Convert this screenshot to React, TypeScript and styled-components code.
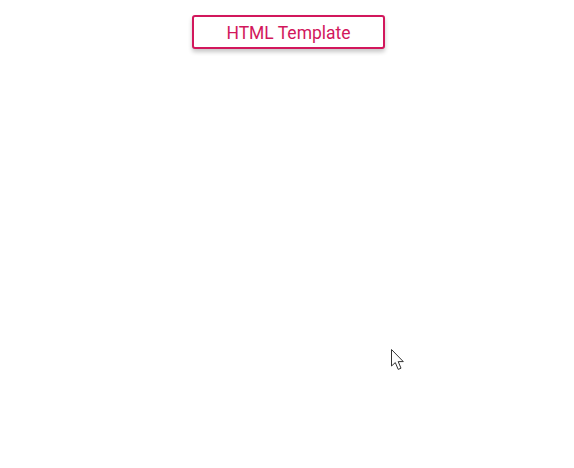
import React from "react"
import styled, { createGlobalStyle } from "styled-components"

const GlobalStyle = createGlobalStyle`
  html, body {
    margin: 0;
    padding: 0;
    background: #ffffff;
    font-family: Roboto, "Noto Sans", sans-serif;
  }
`

const Page = styled.div`
  position: relative;
  width: 574px;
  height: 468px;
  display: flex;
  justify-content: center;
  align-items: flex-start;
  padding-top: 15px;
  box-sizing: border-box;
`

const TemplateButton = styled.button`
  width: 193px;
  height: 34px;
  margin-left: 3px;
  background: #ffffff;
  border: 2px solid #d2175c;
  border-radius: 3px;
  color: #d2175c;
  font-family: Roboto, sans-serif;
  font-size: 17.5px;
  font-weight: 400;
  cursor: pointer;
  box-shadow: 0 3px 4px rgba(0, 0, 0, 0.22);
  padding: 1px 0 0;
`

const Cursor = styled.svg`
  position: absolute;
  left: 391px;
  top: 349px;
`

function PointerIcon() {
  return (
    <Cursor width="16" height="24" viewBox="0 0 16 24">
      <path
        d="M0.5 0.5 L0.5 17 L4.3 13.6 L7.2 20.4 L10 19.2 L7.2 12.6 L12.3 12.6 Z"
        fill="#ffffff"
        stroke="#333333"
        strokeWidth="1"
        strokeLinejoin="round"
      />
    </Cursor>
  )
}

export default function App() {
  return (
    <>
      <GlobalStyle />
      <Page>
        <TemplateButton>HTML Template</TemplateButton>
        <PointerIcon />
      </Page>
    </>
  )
}
